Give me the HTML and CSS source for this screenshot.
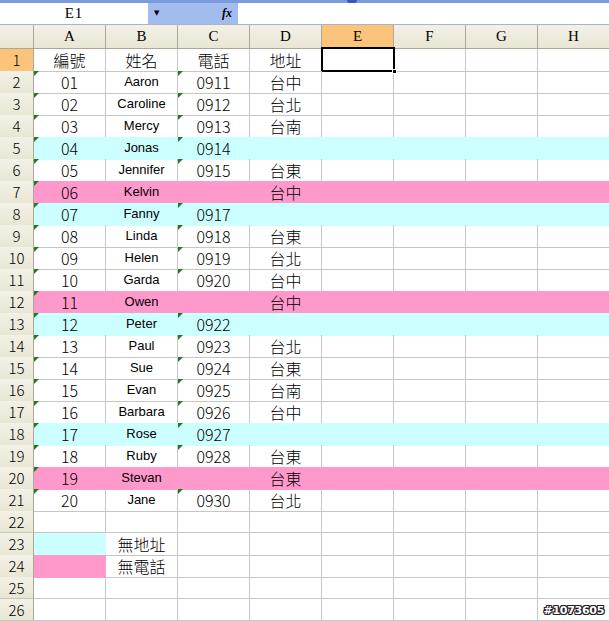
FILE: index.html
```html
<!DOCTYPE html>
<html>
<head>
<meta charset="utf-8">
<link rel="stylesheet" href="styles.css">
</head>
<body>
<div class="top"><span class="knob"></span></div>
<div class="fbar">
  <div class="namebox">E1</div>
  <div class="fxzone"><span class="arrow">▼</span><span class="fx">fx</span></div>
  <div class="fxinput"></div>
</div>
<div class="sheet">
  <div class="row hdr">
    <div class="corner"></div>
    <div class="ch">A</div><div class="ch">B</div><div class="ch">C</div><div class="ch">D</div>
    <div class="ch sel">E</div><div class="ch">F</div><div class="ch">G</div><div class="ch">H</div>
  </div>
  <div class="row"><div class="rh sel">1</div><div class="c">編號</div><div class="c">姓名</div><div class="c">電話</div><div class="c">地址</div><div class="c active"></div><div class="c"></div><div class="c"></div><div class="c"></div></div>
  <div class="row"><div class="rh">2</div><div class="c t">01</div><div class="c n">Aaron</div><div class="c t">0911</div><div class="c">台中</div><div class="c"></div><div class="c"></div><div class="c"></div><div class="c"></div></div>
  <div class="row"><div class="rh">3</div><div class="c t">02</div><div class="c n">Caroline</div><div class="c t">0912</div><div class="c">台北</div><div class="c"></div><div class="c"></div><div class="c"></div><div class="c"></div></div>
  <div class="row"><div class="rh">4</div><div class="c t">03</div><div class="c n">Mercy</div><div class="c t">0913</div><div class="c">台南</div><div class="c"></div><div class="c"></div><div class="c"></div><div class="c"></div></div>
  <div class="row cyan"><div class="rh">5</div><div class="c t">04</div><div class="c n">Jonas</div><div class="c t">0914</div><div class="c"></div><div class="c"></div><div class="c"></div><div class="c"></div><div class="c"></div></div>
  <div class="row"><div class="rh">6</div><div class="c t">05</div><div class="c n">Jennifer</div><div class="c t">0915</div><div class="c">台東</div><div class="c"></div><div class="c"></div><div class="c"></div><div class="c"></div></div>
  <div class="row pink"><div class="rh">7</div><div class="c t">06</div><div class="c n">Kelvin</div><div class="c"></div><div class="c">台中</div><div class="c"></div><div class="c"></div><div class="c"></div><div class="c"></div></div>
  <div class="row cyan"><div class="rh">8</div><div class="c t">07</div><div class="c n">Fanny</div><div class="c t">0917</div><div class="c"></div><div class="c"></div><div class="c"></div><div class="c"></div><div class="c"></div></div>
  <div class="row"><div class="rh">9</div><div class="c t">08</div><div class="c n">Linda</div><div class="c t">0918</div><div class="c">台東</div><div class="c"></div><div class="c"></div><div class="c"></div><div class="c"></div></div>
  <div class="row"><div class="rh">10</div><div class="c t">09</div><div class="c n">Helen</div><div class="c t">0919</div><div class="c">台北</div><div class="c"></div><div class="c"></div><div class="c"></div><div class="c"></div></div>
  <div class="row"><div class="rh">11</div><div class="c t">10</div><div class="c n">Garda</div><div class="c t">0920</div><div class="c">台中</div><div class="c"></div><div class="c"></div><div class="c"></div><div class="c"></div></div>
  <div class="row pink"><div class="rh">12</div><div class="c t">11</div><div class="c n">Owen</div><div class="c"></div><div class="c">台中</div><div class="c"></div><div class="c"></div><div class="c"></div><div class="c"></div></div>
  <div class="row cyan"><div class="rh">13</div><div class="c t">12</div><div class="c n">Peter</div><div class="c t">0922</div><div class="c"></div><div class="c"></div><div class="c"></div><div class="c"></div><div class="c"></div></div>
  <div class="row"><div class="rh">14</div><div class="c t">13</div><div class="c n">Paul</div><div class="c t">0923</div><div class="c">台北</div><div class="c"></div><div class="c"></div><div class="c"></div><div class="c"></div></div>
  <div class="row"><div class="rh">15</div><div class="c t">14</div><div class="c n">Sue</div><div class="c t">0924</div><div class="c">台東</div><div class="c"></div><div class="c"></div><div class="c"></div><div class="c"></div></div>
  <div class="row"><div class="rh">16</div><div class="c t">15</div><div class="c n">Evan</div><div class="c t">0925</div><div class="c">台南</div><div class="c"></div><div class="c"></div><div class="c"></div><div class="c"></div></div>
  <div class="row"><div class="rh">17</div><div class="c t">16</div><div class="c n">Barbara</div><div class="c t">0926</div><div class="c">台中</div><div class="c"></div><div class="c"></div><div class="c"></div><div class="c"></div></div>
  <div class="row cyan"><div class="rh">18</div><div class="c t">17</div><div class="c n">Rose</div><div class="c t">0927</div><div class="c"></div><div class="c"></div><div class="c"></div><div class="c"></div><div class="c"></div></div>
  <div class="row"><div class="rh">19</div><div class="c t">18</div><div class="c n">Ruby</div><div class="c t">0928</div><div class="c">台東</div><div class="c"></div><div class="c"></div><div class="c"></div><div class="c"></div></div>
  <div class="row pink"><div class="rh">20</div><div class="c t">19</div><div class="c n">Stevan</div><div class="c"></div><div class="c">台東</div><div class="c"></div><div class="c"></div><div class="c"></div><div class="c"></div></div>
  <div class="row"><div class="rh">21</div><div class="c t">20</div><div class="c n">Jane</div><div class="c t">0930</div><div class="c">台北</div><div class="c"></div><div class="c"></div><div class="c"></div><div class="c"></div></div>
  <div class="row"><div class="rh">22</div><div class="c"></div><div class="c"></div><div class="c"></div><div class="c"></div><div class="c"></div><div class="c"></div><div class="c"></div><div class="c"></div></div>
  <div class="row"><div class="rh">23</div><div class="c fill-cyan"></div><div class="c">無地址</div><div class="c"></div><div class="c"></div><div class="c"></div><div class="c"></div><div class="c"></div><div class="c"></div></div>
  <div class="row"><div class="rh">24</div><div class="c fill-pink"></div><div class="c">無電話</div><div class="c"></div><div class="c"></div><div class="c"></div><div class="c"></div><div class="c"></div><div class="c"></div></div>
  <div class="row"><div class="rh">25</div><div class="c"></div><div class="c"></div><div class="c"></div><div class="c"></div><div class="c"></div><div class="c"></div><div class="c"></div><div class="c"></div></div>
  <div class="row"><div class="rh">26</div><div class="c"></div><div class="c"></div><div class="c"></div><div class="c"></div><div class="c"></div><div class="c"></div><div class="c"></div><div class="c"></div></div>
  <div class="mark">#1073605</div>
</div>
</body>
</html>
```
FILE: styles.css
```css
html, body {
  margin: 0;
  padding: 0;
}
body {
  width: 609px;
  height: 621px;
  overflow: hidden;
  background: #ffffff;
  font-family: "Noto Sans CJK TC", sans-serif;
  color: #000;
}
.top {
  height: 3px;
  background: #7b9be0;
  position: relative;
}
.knob {
  position: absolute;
  left: 347px;
  top: 0;
  width: 10px;
  height: 3px;
  background: #3358b8;
  border-radius: 0 0 4px 4px;
}
.fbar {
  display: flex;
  height: 21px;
  border-bottom: 1px solid #a8b4c8;
}
.namebox {
  width: 148px;
  text-align: center;
  font-family: "Liberation Serif", serif;
  font-size: 15px;
  line-height: 21px;
  letter-spacing: 1px;
}
.fxzone {
  width: 90px;
  background: #a3bcee;
  display: flex;
  align-items: center;
  justify-content: space-between;
  padding: 0 6px 0 6px;
  box-sizing: border-box;
}
.arrow {
  font-size: 7px;
  line-height: 21px;
  color: #000;
  font-family: "DejaVu Sans", sans-serif;
}
.fx {
  font-family: "Liberation Serif", serif;
  font-style: italic;
  font-weight: bold;
  font-size: 12px;
  line-height: 21px;
}
.fxinput {
  flex: 1;
}
.sheet {
  position: relative;
}
.row {
  display: grid;
  grid-template-columns: 34px repeat(8, 72px);
  height: 22px;
}
.row.hdr {
  height: 24px;
}
.corner, .ch, .rh {
  box-sizing: border-box;
  background: linear-gradient(#f3f1e6, #e9e6d6);
  border-right: 1px solid #aca899;
  border-bottom: 1px solid #aca899;
}
.ch {
  text-align: center;
  font-family: "Liberation Serif", serif;
  font-size: 15px;
  line-height: 23px;
}
.rh {
  text-align: center;
  font-size: 15px;
  font-weight: 300;
  line-height: 21px;
  border-bottom-color: #c9c6b6;
}
.ch.sel, .rh.sel {
  background: #fcc47a;
}
.c {
  box-sizing: border-box;
  position: relative;
  border-right: 1px solid #c6c6c6;
  border-bottom: 1px solid #c6c6c6;
  text-align: center;
  font-size: 16px;
  font-weight: 300;
  line-height: 22px;
  white-space: nowrap;
}
.c.n {
  font-family: "Liberation Sans", Arial, sans-serif;
  font-weight: normal;
  font-size: 13px;
  padding-top: 1px;
  line-height: 20px;
}
.c.t::before {
  content: "";
  position: absolute;
  left: 0;
  top: 0;
  width: 0;
  height: 0;
  border-top: 5px solid #1d7d1d;
  border-right: 5px solid transparent;
}
.row.cyan .c, .c.fill-cyan {
  background: #ccffff;
  border-color: #ccffff;
}
.row.pink .c, .c.fill-pink {
  background: #ff99cc;
  border-color: #ff99cc;
}
.c.active::after {
  content: "";
  position: absolute;
  left: -1px;
  top: -2px;
  right: -2px;
  bottom: -1px;
  border: 2px solid #000;
}
.c.active::before {
  content: "";
  position: absolute;
  right: -4px;
  bottom: -3px;
  width: 5px;
  height: 5px;
  background: #000;
  border: 1px solid #fff;
  box-sizing: border-box;
  z-index: 2;
}
.mark {
  position: absolute;
  right: 5px;
  bottom: 4px;
  font-family: "DejaVu Sans", sans-serif;
  font-weight: bold;
  font-size: 11px;
  line-height: 12px;
  color: #ffffff;
  letter-spacing: -0.3px;
  text-shadow: 1px 0 0 #222, -1px 0 0 #222, 0 1px 0 #222, 0 -1px 0 #222, 1px 1px 0 #222, -1px -1px 0 #222, 1px -1px 0 #222, -1px 1px 0 #222;
}
```
